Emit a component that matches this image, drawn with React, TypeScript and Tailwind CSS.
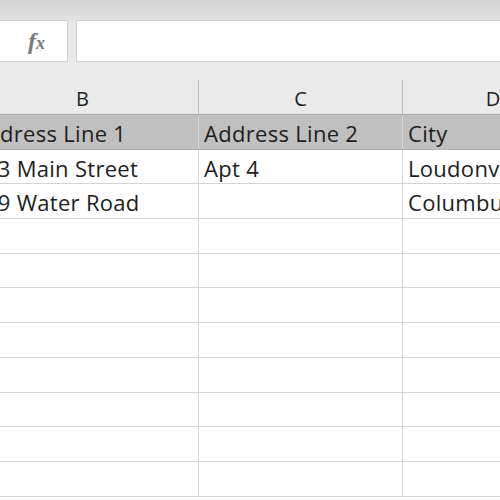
import React from "react";

const cols = [
  { key: "B", w: 232, ml: -33 },
  { key: "C", w: 204, ml: 0 },
  { key: "D", w: 180, ml: 0 },
];

const rows: string[][] = [
  ["Address Line 1", "Address Line 2", "City"],
  ["123 Main Street", "Apt 4", "Loudonville"],
  ["789 Water Road", "", "Columbus"],
  ["", "", ""],
  ["", "", ""],
  ["", "", ""],
  ["", "", ""],
  ["", "", ""],
  ["", "", ""],
  ["", "", ""],
  ["", "", ""],
];

export default function App() {
  return (
    <div className="w-[500px] h-[500px] overflow-hidden bg-white relative" style={{ fontFamily: "'Open Sans', Lato, sans-serif" }}>
      {/* top strip */}
      <div className="h-[20px] bg-gradient-to-b from-[#d2d2d2] to-[#e2e2e2]" />
      {/* formula bar */}
      <div className="h-[42px] flex bg-[#e8e8e8]">
        <div className="w-[68px] h-full bg-white border border-l-0 border-[#cfcfcf] flex items-center justify-end pr-[22px]">
          <span className="italic font-bold text-[#787878] text-[24px] leading-none" style={{ fontFamily: "'Liberation Serif', serif" }}>
            f<span className="text-[18px]">x</span>
          </span>
        </div>
        <div className="w-[8px]" />
        <div className="flex-1 h-full bg-white border border-r-0 border-[#cfcfcf]" />
      </div>
      {/* column headers */}
      <div className="h-[53px] flex bg-[#eaeaea] border-b border-[#a8a8a8] whitespace-nowrap">
        {cols.map((c, i) => (
          <div
            key={c.key}
            className="shrink-0 h-full flex flex-col"
            style={{ width: c.w, marginLeft: c.ml }}
          >
            <div className="h-[19px]" />
            <div className={`flex-1 flex items-center justify-center pt-[4px] text-[20px] text-[#1e1e1e] ${i < 2 ? "border-r border-[#bdbdbd]" : ""}`}>
              {c.key}
            </div>
          </div>
        ))}
      </div>
      {/* rows */}
      {rows.map((r, ri) => (
        <div
          key={ri}
          className={`h-[34.7px] flex whitespace-nowrap border-b ${ri === 0 ? "bg-[#c0c0c0] border-[#b0b0b0]" : "bg-white border-[#d4d4d4]"}`}
        >
          {cols.map((c, ci) => (
            <div
              key={c.key}
              className={`shrink-0 h-full overflow-hidden flex items-center pl-[5px] pt-[3px] text-[22px] tracking-[0.3px] text-[#1e1e1e] ${ci < 2 ? "border-r border-[#d4d4d4]" : ""}`}
              style={{ width: c.w, marginLeft: c.ml }}
            >
              {r[ci]}
            </div>
          ))}
        </div>
      ))}
    </div>
  );
}
